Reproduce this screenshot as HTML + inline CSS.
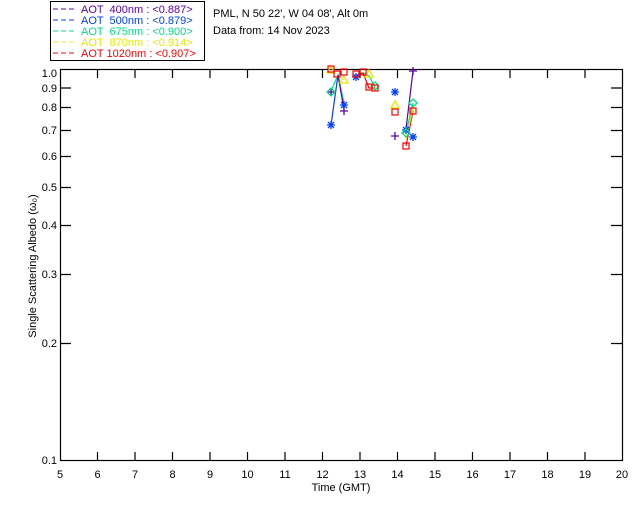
<!DOCTYPE html>
<html><head><meta charset="utf-8"><style>
html,body{margin:0;padding:0;background:#fff;}
svg{display:block;font-family:"Liberation Sans","DejaVu Sans",sans-serif;}
</style></head><body>
<svg width="640" height="512" viewBox="0 0 640 512" xmlns="http://www.w3.org/2000/svg">
<defs>
<path id="pl" d="M-4 0h8M0 -4v8" fill="none"/>
<path id="st" d="M-4 0h8M0 -4v8M-3 -3l6 6M-3 3l6 -6" fill="none"/>
<path id="di" d="M0 -4l4 4l-4 4l-4 -4z" fill="none"/>
<path id="tr" d="M0 -4l4 7h-8z" fill="none"/>
</defs>
<rect width="640" height="512" fill="#fff"/>
<!-- legend -->
<rect x="50.5" y="1.5" width="154" height="59" fill="none" stroke="#000" stroke-width="1"/>
<g font-size="11">
<line x1="53" y1="9" x2="77" y2="9" stroke="#6000b0" stroke-dasharray="5,3"/>
<text x="81" y="13" fill="#6000b0" xml:space="preserve">AOT  400nm : &lt;0.887&gt;</text>
<line x1="53" y1="20" x2="77" y2="20" stroke="#0040ff" stroke-dasharray="5,3"/>
<text x="81" y="24" fill="#0040ff" xml:space="preserve">AOT  500nm : &lt;0.879&gt;</text>
<line x1="53" y1="31" x2="77" y2="31" stroke="#00e080" stroke-dasharray="5,3"/>
<text x="81" y="35" fill="#00e080" xml:space="preserve">AOT  675nm : &lt;0.900&gt;</text>
<line x1="53" y1="42" x2="77" y2="42" stroke="#f0f000" stroke-dasharray="5,3"/>
<text x="81" y="46" fill="#e8e800" xml:space="preserve">AOT  870nm : &lt;0.914&gt;</text>
<line x1="53" y1="53" x2="77" y2="53" stroke="#ff0000" stroke-dasharray="5,3"/>
<text x="81" y="57" fill="#ff0000" xml:space="preserve">AOT 1020nm : &lt;0.907&gt;</text>
</g>
<g font-size="11" fill="#000">
<text x="213" y="17">PML, N 50 22', W 04 08', Alt 0m</text>
<text x="213" y="34">Data from: 14 Nov 2023</text>
</g>
<!-- axes box -->
<rect x="60.5" y="69.5" width="562" height="391" fill="none" stroke="#000" stroke-width="1.2"/>
<g stroke="#000" stroke-width="1.2">
<path d="M97.5 460v-8M135 460v-8M172.5 460v-8M210 460v-8M247.5 460v-8M285 460v-8M322.5 460v-8M360 460v-8M397.5 460v-8M435 460v-8M472.5 460v-8M510 460v-8M547.5 460v-8M585 460v-8
M97.5 70v8M135 70v8M172.5 70v8M210 70v8M247.5 70v8M285 70v8M322.5 70v8M360 70v8M397.5 70v8M435 70v8M472.5 70v8M510 70v8M547.5 70v8M585 70v8"/>
<path d="M60 88h11M60 107.5h11M60 130.5h11M60 156.5h11M60 187.5h11M60 225.5h11M60 274.5h11M60 343.5h11
M622 88h-11M622 107.5h-11M622 130.5h-11M622 156.5h-11M622 187.5h-11M622 225.5h-11M622 274.5h-11M622 343.5h-11"/>
</g>
<g font-size="11" fill="#000" text-anchor="end">
<text x="57" y="77">1.0</text><text x="57" y="92">0.9</text><text x="57" y="111">0.8</text>
<text x="57" y="134">0.7</text><text x="57" y="160">0.6</text><text x="57" y="191">0.5</text>
<text x="57" y="229">0.4</text><text x="57" y="278">0.3</text><text x="57" y="347">0.2</text>
<text x="57" y="464">0.1</text>
</g>
<g font-size="11" fill="#000" text-anchor="middle">
<text x="60" y="478">5</text><text x="97.5" y="478">6</text><text x="135" y="478">7</text><text x="172.5" y="478">8</text>
<text x="210" y="478">9</text><text x="247.5" y="478">10</text><text x="285" y="478">11</text><text x="322.5" y="478">12</text>
<text x="360" y="478">13</text><text x="397.5" y="478">14</text><text x="435" y="478">15</text><text x="472.5" y="478">16</text>
<text x="510" y="478">17</text><text x="547.5" y="478">18</text><text x="585" y="478">19</text><text x="622" y="478">20</text>
<text x="341" y="491">Time (GMT)</text>
</g>
<text x="36" y="266" font-size="11" text-anchor="middle" transform="rotate(-90 36 266)">Single Scattering Albedo (ω₀)</text>
<!-- data lines -->
<g fill="none" stroke-width="1.2">
<polyline stroke="#0040ff" points="331,125 338,75 344,105"/>
<polyline stroke="#00e080" points="331,91 338,75 344,103"/>
<polyline stroke="#6000b0" points="338,75 344,110"/>
<polyline stroke="#00e080" points="357,75 363,73 369,76 375,87"/>
<polyline stroke="#ff0000" points="357,75 363,73 369,88 375,88"/>
<polyline stroke="#6000b0" points="406,129 413,71"/>
<polyline stroke="#00e080" points="406,133 413,103"/>
<polyline stroke="#ff0000" points="406,146 413,111"/>
<polyline stroke="#e8e800" points="406,140 413,108"/>
</g>
<!-- markers -->
<g stroke-width="1.3">
<use href="#pl" x="331" y="92" stroke="#6000b0"/>
<use href="#st" x="331" y="125" stroke="#0040ff"/>
<use href="#pl" x="344" y="111" stroke="#6000b0"/>
<use href="#st" x="344" y="105" stroke="#0040ff"/>
<use href="#st" x="356" y="77" stroke="#0040ff"/>
<use href="#pl" x="395" y="136" stroke="#6000b0"/>
<use href="#st" x="395" y="92" stroke="#0040ff"/>
<use href="#st" x="413" y="137" stroke="#0040ff"/>
<use href="#st" x="406" y="130" stroke="#0040ff"/>
<use href="#pl" x="413" y="71" stroke="#6000b0"/>
<use href="#di" x="331" y="92" stroke="#00e080"/>
<use href="#di" x="413" y="103" stroke="#00e080"/>
<use href="#di" x="406" y="133" stroke="#00e080"/>
<use href="#di" x="375" y="86" stroke="#00e080"/>
<use href="#tr" x="344" y="80" stroke="#e8e800"/>
<use href="#tr" x="395" y="105" stroke="#e8e800"/>
<use href="#tr" x="331" y="70" stroke="#e8e800"/>
<use href="#tr" x="369" y="74" stroke="#e8e800"/>
</g>
<g fill="none" stroke="#ff0000" stroke-width="1.2">
<rect x="328" y="66" width="6" height="6"/>
<rect x="334" y="71" width="6" height="6"/>
<rect x="341" y="69" width="6" height="6"/>
<rect x="353" y="71" width="6" height="6"/>
<rect x="360" y="69" width="6" height="6"/>
<rect x="366" y="84" width="6" height="6"/>
<rect x="372" y="85" width="6" height="6"/>
<rect x="392" y="109" width="6" height="6"/>
<rect x="410" y="108" width="6" height="6"/>
<rect x="403" y="143" width="6" height="6"/>
</g>
</svg>
</body></html>
